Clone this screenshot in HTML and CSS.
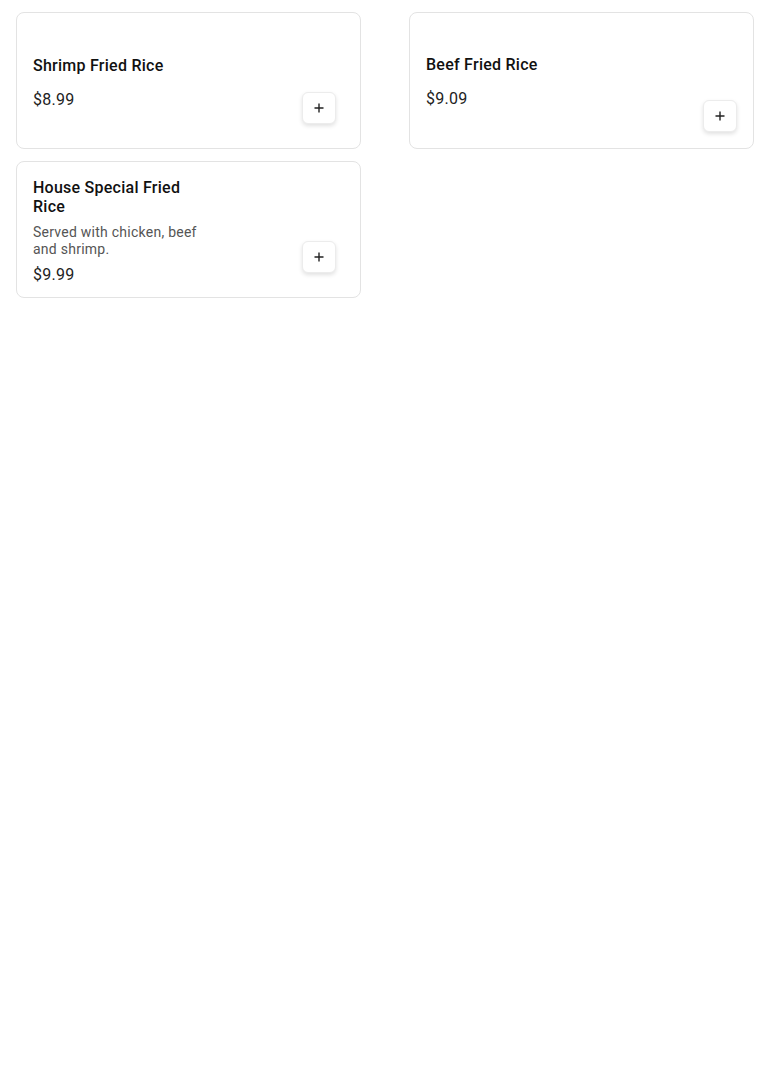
FILE: index.html
```html
<!DOCTYPE html>
<html lang="en">
  <head>
    <meta charset="UTF-8" />
    <meta name="viewport" content="width=device-width, initial-scale=1" />
    <title>Fried Rice</title>
    <link rel="stylesheet" href="styles.css">
  </head>
  <body>
    <div class="menu-grid">

      <div class="item-card">
        <div class="item-info">
          <h3 class="item-name">Shrimp Fried Rice</h3>
          <div class="item-price">$8.99</div>
        </div>
        <button class="add-button" aria-label="Add Shrimp Fried Rice">
          <svg width="10" height="10" viewBox="0 0 10 10"><path d="M5 0.5v9M0.5 5h9" stroke="#222" stroke-width="1.4" fill="none"/></svg>
        </button>
      </div>

      <div class="item-card item-card--flush">
        <div class="item-info">
          <h3 class="item-name">Beef Fried Rice</h3>
          <div class="item-price">$9.09</div>
        </div>
        <button class="add-button" aria-label="Add Beef Fried Rice">
          <svg width="10" height="10" viewBox="0 0 10 10"><path d="M5 0.5v9M0.5 5h9" stroke="#222" stroke-width="1.4" fill="none"/></svg>
        </button>
      </div>

      <div class="item-card">
        <div class="item-info">
          <h3 class="item-name">House Special Fried Rice</h3>
          <p class="item-desc">Served with chicken, beef and shrimp.</p>
          <div class="item-price">$9.99</div>
        </div>
        <button class="add-button" aria-label="Add House Special Fried Rice">
          <svg width="10" height="10" viewBox="0 0 10 10"><path d="M5 0.5v9M0.5 5h9" stroke="#222" stroke-width="1.4" fill="none"/></svg>
        </button>
      </div>

    </div>
  </body>
</html>
```

FILE: styles.css
```css
* {
  box-sizing: border-box;
  margin: 0;
  padding: 0;
}
body {
  font-family: Roboto, "Liberation Sans", sans-serif;
  background: #fff;
  color: #1a1a1a;
  padding: 12px 16px;
  letter-spacing: 0.25px;
}
.menu-grid {
  display: grid;
  grid-template-columns: 345px 345px;
  column-gap: 48px;
  row-gap: 12px;
}
.item-card {
  display: flex;
  justify-content: space-between;
  min-height: 137px;
  padding: 16px 16px 13px;
  border: 1px solid #e3e3e3;
  border-radius: 8px;
  background: #fff;
}
.item-info {
  align-self: center;
  display: flex;
  flex-direction: column;
  width: 180px;
}
.item-name {
  font-size: 16px;
  font-weight: 500;
  line-height: 19px;
  color: #111;
  margin-bottom: 8px;
}
.item-desc {
  font-size: 14px;
  line-height: 17px;
  color: #555;
}
.item-price {
  font-size: 16px;
  line-height: 19px;
  color: #222;
  margin-top: 7px;
}
.add-button {
  align-self: flex-end;
  display: flex;
  align-items: center;
  justify-content: center;
  width: 34px;
  height: 32px;
  margin: 0 8px 11px 0;
  background: #fff;
  border: 1px solid #ececec;
  border-radius: 6px;
  box-shadow: 0 2px 4px rgba(0, 0, 0, 0.12);
  cursor: pointer;
}
.item-card--flush {
  padding-top: 15px;
}
.item-card--flush .add-button {
  margin: 0 0 3px 0;
}
```
